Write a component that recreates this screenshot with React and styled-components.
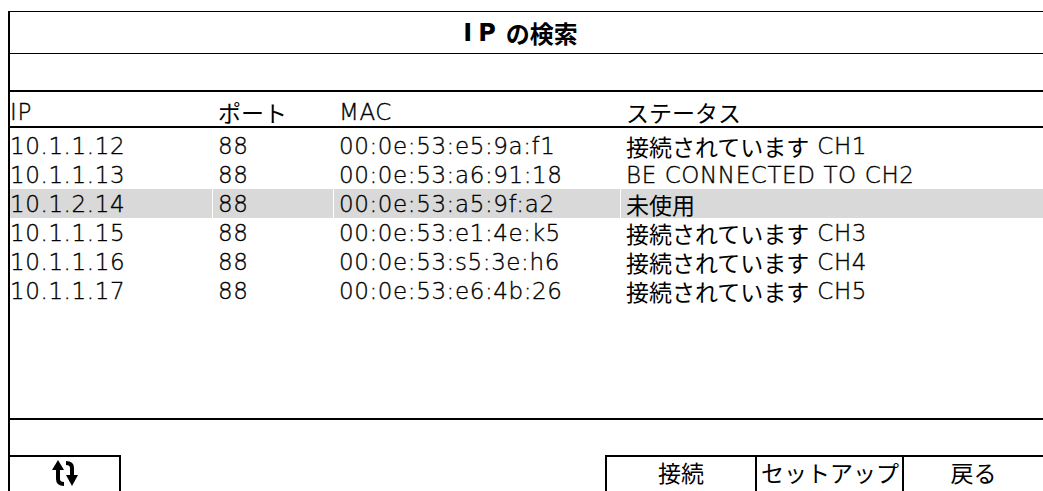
import React from "react";
import styled, { createGlobalStyle } from "styled-components";

const GlobalStyle = createGlobalStyle`
  html, body {
    margin: 0;
    padding: 0;
    background: #ffffff;
    overflow: hidden;
  }
  body {
    padding: 11px 0 0 8px;
    font-family: "DejaVu Sans", "Noto Sans CJK JP", sans-serif;
    color: #000;
  }
`;

const Frame = styled.div`
  width: calc(100vw - 8px);
  border-top: 1px solid #000;
  border-left: 2px solid #000;
  box-sizing: border-box;
  display: flex;
  flex-direction: column;
  & > * {
    flex-shrink: 0;
  }
`;

const Title = styled.div`
  height: 41px;
  border-bottom: 1px solid #000;
  display: flex;
  align-items: center;
  justify-content: center;
  font-size: 24px;
  font-weight: 700;
  font-family: "DejaVu Sans", "Noto Sans CJK JP", sans-serif;
  padding-right: 12px;
  .latin {
    letter-spacing: 6px;
    margin-right: 4px;
  }
`;

const Blank = styled.div`
  height: 36px;
  border-bottom: 2px solid #000;
`;

const Row = styled.div`
  display: grid;
  grid-template-columns: 202px 121px 287px 1fr;
  height: ${p => (p.$head ? "36px" : "29px")};
  border-bottom: ${p => (p.$head ? "2px solid #000" : "none")};
  background: ${p => (p.$active ? "#d9d9d9" : "transparent")};
  font-size: 23px;
  line-height: 26px;
  font-weight: 200;
  -webkit-text-stroke: 0.35px #000;
  letter-spacing: 0.6px;
  padding-top: ${p => (p.$head ? "5px" : "0")};
  box-sizing: border-box;
`;

const Cell = styled.div`
  display: flex;
  align-items: center;
  padding-left: ${p => (p.$first ? "0" : "5px")};
  border-left: ${p => (p.$first ? "none" : "1px solid #fff")};
  white-space: pre;
`;

const Jp = styled.span`
  display: inline-block;
  height: 26px;
  line-height: 26px;
  font-family: "Noto Sans CJK JP", sans-serif;
  font-weight: 400;
  letter-spacing: 0;
  -webkit-text-stroke: 0;
`;

const Body = styled.div`
  height: 292px;
  border-bottom: 2px solid #000;
  padding-top: 3px;
  box-sizing: border-box;
`;

const Footer = styled.div`
  display: flex;
  justify-content: space-between;
  padding-top: 35px;
  margin-left: -2px;
`;

const IconButton = styled.div`
  width: 113px;
  height: 40px;
  box-sizing: border-box;
  border: 2px solid #000;
  display: flex;
  justify-content: center;
  padding-top: 3px;
`;

const Group = styled.div`
  display: flex;
`;

const Button = styled.div`
  width: ${p => p.$w}px;
  height: 40px;
  box-sizing: border-box;
  border-top: 2px solid #000;
  border-left: 2px solid #000;
  font-family: "Noto Sans CJK JP", sans-serif;
  font-size: 23px;
  display: flex;
  justify-content: ${p => (p.$left ? "flex-start" : "center")};
  padding-left: ${p => (p.$left ? "4px" : "0")};
  line-height: 30px;
`;

const ArrowsIcon = () => (
  <svg width="30" height="27" viewBox="0 0 30 27">
    <polygon points="8,0 2,10 14,10" fill="#000" />
    <path d="M8 9 V19 Q8 24 14 24" stroke="#000" strokeWidth="4" fill="none" />
    <path d="M16 3 Q22 3 22 8 V16" stroke="#000" strokeWidth="4" fill="none" />
    <polygon points="16,15 28,15 22,26" fill="#000" />
  </svg>
);

const rows = [
  ["10.1.1.12", "88", "00:0e:53:e5:9a:f1", "接続されています", " CH1"],
  ["10.1.1.13", "88", "00:0e:53:a6:91:18", "", "BE CONNECTED TO CH2"],
  ["10.1.2.14", "88", "00:0e:53:a5:9f:a2", "未使用", "", true],
  ["10.1.1.15", "88", "00:0e:53:e1:4e:k5", "接続されています", " CH3"],
  ["10.1.1.16", "88", "00:0e:53:s5:3e:h6", "接続されています", " CH4"],
  ["10.1.1.17", "88", "00:0e:53:e6:4b:26", "接続されています", " CH5"],
];

export default function App() {
  return (
    <>
      <GlobalStyle />
      <Frame>
        <Title>
          <span className="latin">IP</span>の検索
        </Title>
        <Blank />
        <Row $head>
          <Cell $first>IP</Cell>
          <Cell><Jp>ポート</Jp></Cell>
          <Cell>MAC</Cell>
          <Cell><Jp>ステータス</Jp></Cell>
        </Row>
        <Body>
          {rows.map(r => (
            <Row key={r[0]} $active={r[5]}>
              <Cell $first>{r[0]}</Cell>
              <Cell>{r[1]}</Cell>
              <Cell>{r[2]}</Cell>
              <Cell>
                {r[3] && <Jp>{r[3]}</Jp>}
                {r[4]}
              </Cell>
            </Row>
          ))}
        </Body>
        <Footer>
          <IconButton>
            <ArrowsIcon />
          </IconButton>
          <Group>
            <Button $w={150}>接続</Button>
            <Button $w={147} $left>セットアップ</Button>
            <Button $w={141}>戻る</Button>
          </Group>
        </Footer>
      </Frame>
    </>
  );
}
